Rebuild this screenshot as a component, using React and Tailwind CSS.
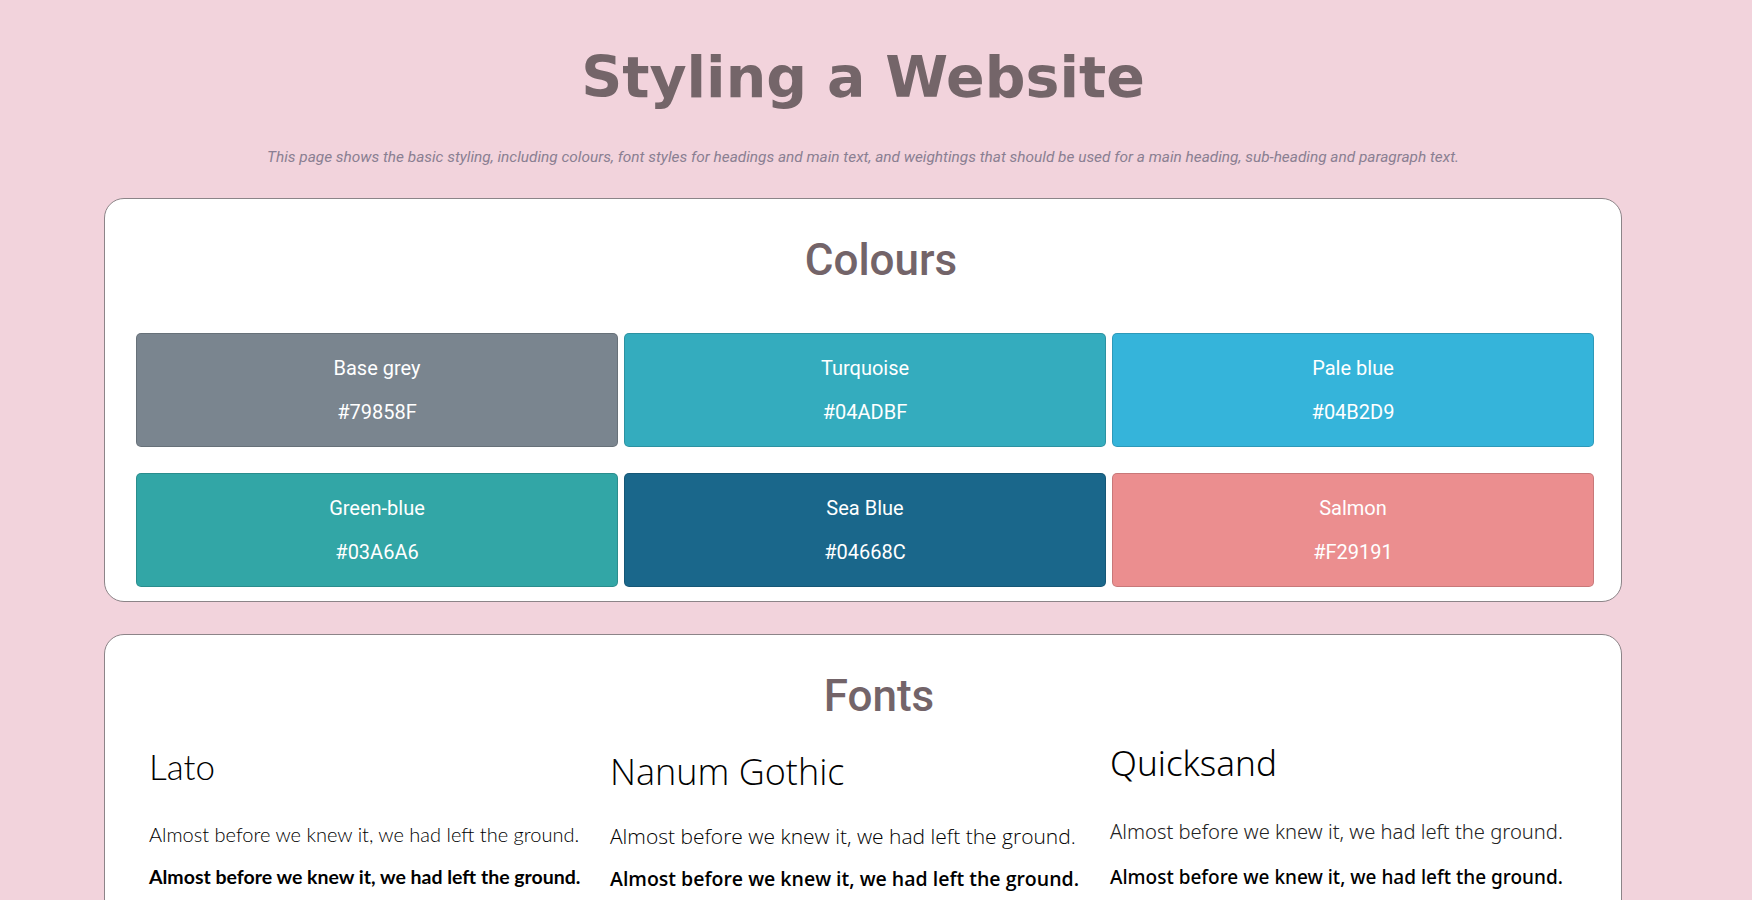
import React from "react";

const swatches = [
  { name: "Base grey", hex: "#79858F", bg: "bg-[#7a858f]" },
  { name: "Turquoise", hex: "#04ADBF", bg: "bg-[#34acbe]" },
  { name: "Pale blue", hex: "#04B2D9", bg: "bg-[#35b4da]" },
  { name: "Green-blue", hex: "#03A6A6", bg: "bg-[#32a6a6]" },
  { name: "Sea Blue", hex: "#04668C", bg: "bg-[#1a678b]" },
  { name: "Salmon", hex: "#F29191", bg: "bg-[#eb8e8f]" },
];

const sentence = "Almost before we knew it, we had left the ground.";

const Swatch = ({ name, hex, bg }) => (
  <div
    className={`${bg} flex flex-col items-center rounded-[5px] border border-black/15 pt-[21px] pb-[20px] text-[20px] leading-[27px] text-white font-['Roboto',sans-serif]`}
  >
    <p>{name}</p>
    <p className="mt-[17px]">{hex}</p>
  </div>
);

const App = () => {
  return (
    <div className="min-h-screen bg-[#f2d3dc] pb-10">
      <div className="w-[1726px]">
        {/* page heading */}
        <h1 className="pt-[43px] text-center text-[57px] leading-[68px] font-bold text-[#746569] font-['DejaVu_Sans',sans-serif]">
          Styling a Website
        </h1>
        <p className="mt-[35px] text-center text-[15.4px] leading-[22px] italic text-[#8a7f92] font-['Roboto',sans-serif]">
          This page shows the basic styling, including colours, font styles for headings and main text, and weightings that should be used for a main heading, sub-heading and paragraph text.
        </p>

        {/* colours card */}
        <section className="ml-[104px] mt-[30px] w-[1518px] rounded-[20px] border border-[#8c8488] bg-white pt-[35px] pb-[14px] pl-[31px] pr-[27px]">
          <h2 className="pl-[32px] text-center text-[44px] leading-[52px] font-medium text-[#736469] font-['Roboto',sans-serif]">
            Colours
          </h2>
          <div className="mt-[47px] grid grid-cols-3 gap-x-[6px] gap-y-[26px]">
            {swatches.map((s) => (
              <Swatch key={s.name} {...s} />
            ))}
          </div>
        </section>

        {/* fonts card */}
        <section className="ml-[104px] mt-[32px] w-[1518px] rounded-[20px] border border-[#8c8488] bg-white pt-[35px] pb-[80px]">
          <h2 className="pl-[32px] text-center text-[44px] leading-[52px] font-medium text-[#736469] font-['Roboto',sans-serif]">
            Fonts
          </h2>
          <div className="grid grid-cols-[461px_500px_1fr] pl-[44px] text-black">
            <div className="font-['Lato',sans-serif]">
              <h3 className="mt-[23px] text-[35px] leading-[42px] font-light">Lato</h3>
              <p className="mt-[34px] text-[20px] leading-[26px] font-light">{sentence}</p>
              <p className="mt-[17px] text-[19.5px] leading-[26px] font-bold">{sentence}</p>
            </div>
            <div className="font-['Open_Sans',sans-serif]">
              <h3 className="mt-[26px] text-[36px] leading-[48px] font-light">Nanum Gothic</h3>
              <p className="mt-[27px] text-[21px] leading-[26px] font-light">{sentence}</p>
              <p className="mt-[17px] text-[19.5px] leading-[26px] font-semibold">{sentence}</p>
            </div>
            <div className="font-['Noto_Sans',sans-serif]">
              <h3 className="mt-[18px] text-[35px] leading-[46px] font-light">Quicksand</h3>
              <p className="mt-[32px] text-[20.2px] leading-[26px] font-light text-[#222]">{sentence}</p>
              <p className="mt-[20px] text-[19px] leading-[26px] font-medium">{sentence}</p>
            </div>
          </div>
        </section>
      </div>
    </div>
  );
};

export default App;
